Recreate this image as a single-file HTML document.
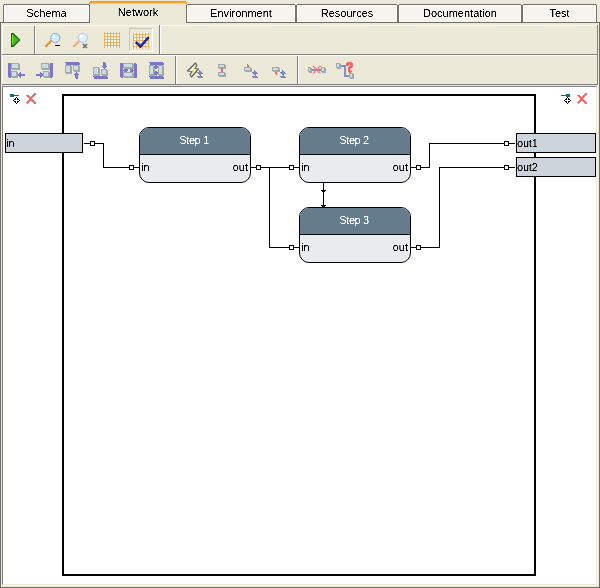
<!DOCTYPE html>
<html><head><meta charset="utf-8">
<style>
*{box-sizing:border-box;margin:0;padding:0}
html,body{width:600px;height:588px;overflow:hidden;background:#ECE9D8;font-family:"Liberation Sans",sans-serif;font-size:11px;color:#000}
.a{position:absolute}
.tab{position:absolute;top:4px;height:19px;border:1px solid #74716A;border-bottom:none;background:#F5F4EF;text-align:center;line-height:16px;box-shadow:inset 0 0 0 1px #fff}
.tab span{display:inline-block}
.t{display:inline-block;filter:url(#th)}
.hd .t{position:relative;left:-1px}
.sel{top:1px;height:22px;background:#ECE9D8;border:none;box-shadow:none;line-height:22px}
.hl{position:absolute;background:#fff}
.dk{position:absolute;background:#716F64}
.gr{position:absolute;background:#ACA899}
.node{position:absolute;width:112px;height:56px;border:1px solid #000;border-radius:10px;overflow:hidden;background:#E9ECEF}
.node .hd{position:absolute;left:0;top:0;right:0;height:27px;background:#657C8D;border-bottom:1px solid #000;color:#fff;text-align:center;line-height:24px;font-size:11px;letter-spacing:-0.4px}
.node .pin{position:absolute;left:1px;top:32px;line-height:14px}
.node .pout{position:absolute;right:2px;top:32px;line-height:14px}
.port{position:absolute;width:5px;height:5px;border:1px solid #000;background:#fff}
.io{position:absolute;border:1px solid #000;background:#CDD4DB;line-height:19px;padding-left:0;letter-spacing:-0.2px}
svg{position:absolute;left:0;top:0}
</style></head><body>
<svg width="0" height="0" style="position:absolute"><filter id="th" x="-5%" y="-5%" width="110%" height="110%"><feComponentTransfer><feFuncA type="linear" slope="3" intercept="-0.9"/></feComponentTransfer></filter></svg>
<!-- tabs -->
<div class="tab sel" style="left:89px;width:98px"><span class="t">Network</span></div>
<div class="tab" style="left:3px;width:87px"><span class="t">Schema</span></div>
<div class="tab" style="left:186px;width:110px"><span class="t">Environment</span></div>
<div class="tab" style="left:296px;width:102px"><span class="t">Resources</span></div>
<div class="tab" style="left:398px;width:124px"><span class="t">Documentation</span></div>
<div class="tab" style="left:522px;width:75px"><span class="t">Test</span></div>
<div class="a" style="left:90px;top:1px;width:96px;height:1px;background:#FF8A1E"></div>
<div class="a" style="left:89px;top:2px;width:98px;height:1px;background:#FFAA2E"></div>
<div class="a" style="left:89px;top:3px;width:98px;height:1px;background:#FFC83A"></div>
<div class="a" style="left:89px;top:2px;width:1px;height:2px;background:#FF8A1E"></div>
<div class="a" style="left:186px;top:2px;width:1px;height:2px;background:#FF8A1E"></div>

<div class="a" style="left:3px;top:4px;width:1px;height:1px;background:#F2F0E6"></div><div class="a" style="left:89px;top:4px;width:1px;height:1px;background:#F2F0E6"></div><div class="a" style="left:186px;top:4px;width:1px;height:1px;background:#F2F0E6"></div><div class="a" style="left:295px;top:4px;width:1px;height:1px;background:#F2F0E6"></div><div class="a" style="left:296px;top:4px;width:1px;height:1px;background:#F2F0E6"></div><div class="a" style="left:397px;top:4px;width:1px;height:1px;background:#F2F0E6"></div><div class="a" style="left:398px;top:4px;width:1px;height:1px;background:#F2F0E6"></div><div class="a" style="left:521px;top:4px;width:1px;height:1px;background:#F2F0E6"></div><div class="a" style="left:522px;top:4px;width:1px;height:1px;background:#F2F0E6"></div><div class="a" style="left:596px;top:4px;width:1px;height:1px;background:#F2F0E6"></div>
<!-- panel borders -->
<div class="dk" style="left:0;top:22px;width:89px;height:1px"></div>
<div class="dk" style="left:187px;top:22px;width:413px;height:1px"></div>
<div class="dk" style="left:0;top:22px;width:1px;height:566px"></div>
<div class="dk" style="left:599px;top:22px;width:1px;height:566px"></div>
<div class="dk" style="left:0;top:587px;width:600px;height:1px"></div>

<!-- toolbar rows -->
<div class="hl" style="left:2px;top:25px;width:596px;height:1px"></div>
<div class="hl" style="left:2px;top:25px;width:1px;height:59px"></div>
<div class="gr" style="left:2px;top:54px;width:596px;height:1px;background:#808080"></div>
<div class="hl" style="left:2px;top:55px;width:596px;height:1px"></div>
<div class="gr" style="left:2px;top:84px;width:596px;height:1px;background:#808080"></div>
<div class="gr" style="left:597px;top:25px;width:1px;height:60px;background:#808080"></div>
<!-- separators -->
<div class="gr" style="left:34px;top:26px;width:1px;height:28px;background:#808080"></div>
<div class="hl" style="left:35px;top:26px;width:1px;height:28px"></div>
<div class="gr" style="left:159px;top:25px;width:1px;height:29px;background:#808080"></div>
<div class="hl" style="left:160px;top:25px;width:1px;height:29px"></div>
<div class="gr" style="left:175px;top:56px;width:1px;height:28px;background:#808080"></div>
<div class="hl" style="left:176px;top:56px;width:1px;height:28px"></div>
<div class="gr" style="left:297px;top:56px;width:1px;height:28px;background:#808080"></div>
<div class="hl" style="left:298px;top:56px;width:1px;height:28px"></div>

<svg width="600" height="90" viewBox="0 0 600 90" style="position:absolute;left:0;top:0">
<!-- play -->
<polygon points="11,33 13.5,33 20.5,40 13.5,47 11,47" fill="#1E6A12"/>
<polygon points="12,34.5 13,34.5 18.8,40 13,45.5 12,45.5" fill="#4DAF2C"/>
<rect x="12" y="35" width="1" height="9" fill="#6CF000" shape-rendering="crispEdges"/>
<!-- zoom out -->
<line x1="46" y1="46" x2="50.8" y2="41.2" stroke="#D88838" stroke-width="2.2" stroke-linecap="round"/>
<line x1="45.7" y1="45.5" x2="50.3" y2="40.9" stroke="#F7B45A" stroke-width="1" stroke-linecap="round"/>
<circle cx="55.3" cy="37.9" r="4.6" fill="#CCEBFA" stroke="#9AA6DA" stroke-width="1"/>
<circle cx="53.8" cy="36.4" r="1.4" fill="#fff"/>
<rect x="55" y="45" width="5" height="1.2" fill="#000" shape-rendering="crispEdges"/>
<!-- zoom in (faded) -->
<line x1="74" y1="46" x2="78.8" y2="41.2" stroke="#E0A87A" stroke-width="2.2" stroke-linecap="round"/>
<line x1="73.7" y1="45.5" x2="78.3" y2="40.9" stroke="#F8CC90" stroke-width="1" stroke-linecap="round"/>
<circle cx="82.8" cy="37.9" r="4.6" fill="#DDF0FB" stroke="#BCC4E6" stroke-width="1"/>
<circle cx="81.3" cy="36.4" r="1.4" fill="#fff"/>
<path d="M83 44 L87 48 M87 44 L83 48" stroke="#6E6E6E" stroke-width="1.6"/>
<!-- grid -->
<g shape-rendering="crispEdges">
<g transform="translate(104,32)"><g id="grid"><rect x="0" y="0" width="16" height="16" fill="#F0AD5E"/><g fill="#F4FFFF"><rect x="1" y="0" width="2" height="1"/><rect x="1" y="2" width="2" height="2"/><rect x="1" y="5" width="2" height="2"/><rect x="1" y="8" width="2" height="2"/><rect x="1" y="11" width="2" height="2"/><rect x="1" y="14" width="2" height="2"/><rect x="4" y="0" width="2" height="1"/><rect x="4" y="2" width="2" height="2"/><rect x="4" y="5" width="2" height="2"/><rect x="4" y="8" width="2" height="2"/><rect x="4" y="11" width="2" height="2"/><rect x="4" y="14" width="2" height="2"/><rect x="7" y="0" width="2" height="1"/><rect x="7" y="2" width="2" height="2"/><rect x="7" y="5" width="2" height="2"/><rect x="7" y="8" width="2" height="2"/><rect x="7" y="11" width="2" height="2"/><rect x="7" y="14" width="2" height="2"/><rect x="10" y="0" width="2" height="1"/><rect x="10" y="2" width="2" height="2"/><rect x="10" y="5" width="2" height="2"/><rect x="10" y="8" width="2" height="2"/><rect x="10" y="11" width="2" height="2"/><rect x="10" y="14" width="2" height="2"/><rect x="13" y="0" width="2" height="1"/><rect x="13" y="2" width="2" height="2"/><rect x="13" y="5" width="2" height="2"/><rect x="13" y="8" width="2" height="2"/><rect x="13" y="11" width="2" height="2"/><rect x="13" y="14" width="2" height="2"/></g></g></g>
<!-- pressed button -->
<rect x="129" y="28" width="24" height="24" fill="#fff"/>
<rect x="129" y="28" width="23" height="23" fill="#C9C6BC"/>
<rect x="130" y="29" width="22" height="22" fill="#ECE9D8"/>
<use href="#grid" x="133" y="33"/>
</g>
<polyline points="136.5,42.5 140.5,46.5 148,38" fill="none" stroke="#0A0A50" stroke-width="2.4" stroke-linecap="round" stroke-linejoin="miter"/>
<polyline points="137,42.5 140.5,46 147.5,38.5" fill="none" stroke="#2233F0" stroke-width="1.1" stroke-linecap="round"/>

<!-- row 2 -->
<polygon points="195.5,63 197,65.5 195,68.5 198.5,69 191.5,77 190,74.5 192,71.5 187.5,71" fill="#E9E6B0" stroke="#5E5E60" stroke-width="1.15" stroke-linejoin="round"/><path d="M190.5 71L194.5 67" stroke="#FBFAE0" stroke-width="1.5"/>
<g shape-rendering="crispEdges"><rect x="8" y="63" width="3" height="14" fill="#7D77CA"/><rect x="9" y="77" width="2" height="1" fill="#7D77CA"/><rect x="11" y="63" width="9" height="7" fill="#A1AAAA"/><rect x="12" y="64" width="6" height="4" fill="#C9DEE5"/><rect x="19" y="63" width="1" height="1" fill="#ECE9D8"/><rect x="11" y="69" width="1" height="1" fill="#ECE9D8"/><rect x="11" y="71" width="7" height="7" fill="#A1AAAA"/><rect x="12" y="72" width="4" height="4" fill="#C9DEE5"/><rect x="17" y="71" width="1" height="1" fill="#ECE9D8"/><rect x="11" y="77" width="1" height="1" fill="#ECE9D8"/><rect x="20" y="72" width="1" height="1" fill="#7D77CA"/><rect x="19" y="73" width="2" height="1" fill="#7D77CA"/><rect x="18" y="74" width="7" height="1" fill="#7D77CA"/><rect x="18" y="75" width="7" height="1" fill="#7D77CA"/><rect x="19" y="76" width="2" height="1" fill="#7D77CA"/><rect x="20" y="77" width="1" height="1" fill="#7D77CA"/><rect x="50" y="63" width="3" height="14" fill="#7D77CA"/><rect x="50" y="77" width="2" height="1" fill="#7D77CA"/><rect x="41" y="63" width="9" height="7" fill="#A1AAAA"/><rect x="42" y="64" width="6" height="4" fill="#C9DEE5"/><rect x="49" y="63" width="1" height="1" fill="#ECE9D8"/><rect x="41" y="69" width="1" height="1" fill="#ECE9D8"/><rect x="43" y="71" width="7" height="7" fill="#A1AAAA"/><rect x="44" y="72" width="4" height="4" fill="#C9DEE5"/><rect x="49" y="71" width="1" height="1" fill="#ECE9D8"/><rect x="43" y="77" width="1" height="1" fill="#ECE9D8"/><rect x="40" y="72" width="1" height="1" fill="#7D77CA"/><rect x="40" y="73" width="2" height="1" fill="#7D77CA"/><rect x="36" y="74" width="7" height="1" fill="#7D77CA"/><rect x="36" y="75" width="7" height="1" fill="#7D77CA"/><rect x="40" y="76" width="2" height="1" fill="#7D77CA"/><rect x="40" y="77" width="1" height="1" fill="#7D77CA"/><rect x="65" y="62" width="14" height="1" fill="#7D77CA"/><rect x="66" y="63" width="14" height="2" fill="#7D77CA"/><rect x="65" y="65" width="7" height="9" fill="#A1AAAA"/><rect x="66" y="66" width="4" height="6" fill="#C9DEE5"/><rect x="71" y="65" width="1" height="1" fill="#ECE9D8"/><rect x="65" y="73" width="1" height="1" fill="#ECE9D8"/><rect x="73" y="65" width="7" height="7" fill="#A1AAAA"/><rect x="74" y="66" width="4" height="4" fill="#C9DEE5"/><rect x="79" y="65" width="1" height="1" fill="#ECE9D8"/><rect x="73" y="71" width="1" height="1" fill="#ECE9D8"/><rect x="76" y="72" width="1" height="1" fill="#7D77CA"/><rect x="75" y="73" width="3" height="1" fill="#7D77CA"/><rect x="74" y="74" width="5" height="1" fill="#7D77CA"/><rect x="75" y="75" width="3" height="1" fill="#7D77CA"/><rect x="75" y="76" width="3" height="1" fill="#7D77CA"/><rect x="75" y="77" width="3" height="1" fill="#7D77CA"/><rect x="76" y="78" width="2" height="1" fill="#7D77CA"/><rect x="93" y="76" width="14" height="1" fill="#7D77CA"/><rect x="94" y="77" width="14" height="2" fill="#7D77CA"/><rect x="93" y="67" width="7" height="9" fill="#A1AAAA"/><rect x="94" y="68" width="4" height="6" fill="#C9DEE5"/><rect x="99" y="67" width="1" height="1" fill="#ECE9D8"/><rect x="93" y="75" width="1" height="1" fill="#ECE9D8"/><rect x="101" y="69" width="7" height="7" fill="#A1AAAA"/><rect x="102" y="70" width="4" height="4" fill="#C9DEE5"/><rect x="107" y="69" width="1" height="1" fill="#ECE9D8"/><rect x="101" y="75" width="1" height="1" fill="#ECE9D8"/><rect x="103" y="62" width="2" height="1" fill="#7D77CA"/><rect x="103" y="63" width="3" height="1" fill="#7D77CA"/><rect x="103" y="64" width="3" height="1" fill="#7D77CA"/><rect x="103" y="65" width="3" height="1" fill="#7D77CA"/><rect x="102" y="66" width="5" height="1" fill="#7D77CA"/><rect x="103" y="67" width="3" height="1" fill="#7D77CA"/><rect x="104" y="68" width="1" height="1" fill="#7D77CA"/><rect x="120" y="63" width="3" height="14" fill="#7D77CA"/><rect x="121" y="77" width="2" height="1" fill="#7D77CA"/><rect x="134" y="63" width="2" height="1" fill="#7D77CA"/><rect x="134" y="64" width="3" height="14" fill="#7D77CA"/><rect x="123" y="63" width="11" height="6" fill="#A1AAAA"/><rect x="124" y="64" width="8" height="3" fill="#C9DEE5"/><rect x="133" y="63" width="1" height="1" fill="#ECE9D8"/><rect x="123" y="68" width="1" height="1" fill="#ECE9D8"/><rect x="123" y="72" width="11" height="6" fill="#A1AAAA"/><rect x="124" y="73" width="8" height="3" fill="#C9DEE5"/><rect x="133" y="72" width="1" height="1" fill="#ECE9D8"/><rect x="123" y="77" width="1" height="1" fill="#ECE9D8"/><rect x="124" y="69" width="4" height="1" fill="#7D77CA"/><rect x="123" y="70" width="5" height="1" fill="#7D77CA"/><rect x="124" y="71" width="3" height="1" fill="#7D77CA"/><rect x="130" y="69" width="3" height="1" fill="#7D77CA"/><rect x="130" y="70" width="4" height="1" fill="#7D77CA"/><rect x="130" y="71" width="3" height="1" fill="#7D77CA"/><rect x="149" y="62" width="14" height="1" fill="#7D77CA"/><rect x="150" y="63" width="14" height="2" fill="#7D77CA"/><rect x="149" y="76" width="14" height="1" fill="#7D77CA"/><rect x="150" y="77" width="14" height="2" fill="#7D77CA"/><rect x="149" y="65" width="6" height="11" fill="#A1AAAA"/><rect x="150" y="66" width="3" height="8" fill="#C9DEE5"/><rect x="154" y="65" width="1" height="1" fill="#ECE9D8"/><rect x="149" y="75" width="1" height="1" fill="#ECE9D8"/><rect x="158" y="65" width="6" height="11" fill="#A1AAAA"/><rect x="159" y="66" width="3" height="8" fill="#C9DEE5"/><rect x="163" y="65" width="1" height="1" fill="#ECE9D8"/><rect x="158" y="75" width="1" height="1" fill="#ECE9D8"/><rect x="155" y="65" width="2" height="1" fill="#7D77CA"/><rect x="154" y="66" width="4" height="1" fill="#7D77CA"/><rect x="154" y="67" width="4" height="1" fill="#7D77CA"/><rect x="155" y="68" width="2" height="1" fill="#7D77CA"/><rect x="155" y="71" width="2" height="1" fill="#7D77CA"/><rect x="154" y="72" width="4" height="1" fill="#7D77CA"/><rect x="154" y="73" width="4" height="1" fill="#7D77CA"/><rect x="155" y="74" width="2" height="1" fill="#7D77CA"/><rect x="156" y="75" width="1" height="1" fill="#7D77CA"/><rect x="218" y="64" width="8" height="5" fill="#A1AAAA"/><rect x="219" y="65" width="5" height="2" fill="#C9DEE5"/><rect x="225" y="64" width="1" height="1" fill="#ECE9D8"/><rect x="218" y="68" width="1" height="1" fill="#ECE9D8"/><rect x="218" y="72" width="8" height="5" fill="#A1AAAA"/><rect x="219" y="73" width="5" height="2" fill="#C9DEE5"/><rect x="225" y="72" width="1" height="1" fill="#ECE9D8"/><rect x="218" y="76" width="1" height="1" fill="#ECE9D8"/><rect x="221" y="69" width="2" height="3" fill="#F5636C"/><rect x="221" y="68" width="1" height="1" fill="#F5636C"/><rect x="244" y="67" width="8" height="5" fill="#A1AAAA"/><rect x="245" y="68" width="5" height="2" fill="#C9DEE5"/><rect x="251" y="67" width="1" height="1" fill="#ECE9D8"/><rect x="244" y="71" width="1" height="1" fill="#ECE9D8"/><rect x="247" y="64" width="1" height="1" fill="#F5636C"/><rect x="247" y="65" width="2" height="2" fill="#F5636C"/><rect x="272" y="67" width="8" height="5" fill="#A1AAAA"/><rect x="273" y="68" width="5" height="2" fill="#C9DEE5"/><rect x="279" y="67" width="1" height="1" fill="#ECE9D8"/><rect x="272" y="71" width="1" height="1" fill="#ECE9D8"/><rect x="275" y="72" width="2" height="2" fill="#F5636C"/><rect x="276" y="74" width="1" height="1" fill="#F5636C"/><rect x="254" y="70" width="1" height="1" fill="#8085BD"/><rect x="254" y="71" width="2" height="1" fill="#8085BD"/><rect x="252" y="72" width="5" height="1" fill="#8085BD"/><rect x="253" y="73" width="5" height="1" fill="#8085BD"/><rect x="254" y="74" width="2" height="1" fill="#8085BD"/><rect x="255" y="75" width="1" height="1" fill="#8085BD"/><rect x="252" y="76" width="5" height="1" fill="#8085BD"/><rect x="253" y="77" width="5" height="1" fill="#8085BD"/><rect x="282" y="70" width="1" height="1" fill="#8085BD"/><rect x="282" y="71" width="2" height="1" fill="#8085BD"/><rect x="280" y="72" width="5" height="1" fill="#8085BD"/><rect x="281" y="73" width="5" height="1" fill="#8085BD"/><rect x="282" y="74" width="2" height="1" fill="#8085BD"/><rect x="283" y="75" width="1" height="1" fill="#8085BD"/><rect x="280" y="76" width="5" height="1" fill="#8085BD"/><rect x="281" y="77" width="5" height="1" fill="#8085BD"/><rect x="199" y="70" width="1" height="1" fill="#8085BD"/><rect x="199" y="71" width="2" height="1" fill="#8085BD"/><rect x="197" y="72" width="5" height="1" fill="#8085BD"/><rect x="198" y="73" width="5" height="1" fill="#8085BD"/><rect x="199" y="74" width="2" height="1" fill="#8085BD"/><rect x="200" y="75" width="1" height="1" fill="#8085BD"/><rect x="197" y="76" width="5" height="1" fill="#8085BD"/><rect x="198" y="77" width="5" height="1" fill="#8085BD"/><rect x="308" y="67" width="4" height="6" fill="#A1AAAA"/><rect x="309" y="68" width="1" height="3" fill="#C9DEE5"/><rect x="311" y="67" width="1" height="1" fill="#ECE9D8"/><rect x="308" y="72" width="1" height="1" fill="#ECE9D8"/><rect x="312" y="69" width="9" height="2" fill="#8A90BE"/><rect x="321" y="67" width="5" height="6" fill="#A1AAAA"/><rect x="322" y="68" width="2" height="3" fill="#C9DEE5"/><rect x="325" y="67" width="1" height="1" fill="#ECE9D8"/><rect x="321" y="72" width="1" height="1" fill="#ECE9D8"/><rect x="336" y="63" width="5" height="6" fill="#A1AAAA"/><rect x="337" y="64" width="2" height="3" fill="#C9DEE5"/><rect x="340" y="63" width="1" height="1" fill="#ECE9D8"/><rect x="336" y="68" width="1" height="1" fill="#ECE9D8"/><rect x="341" y="65" width="4" height="2" fill="#8A90BE"/><rect x="344" y="65" width="2" height="12" fill="#8A90BE"/><rect x="346" y="75" width="3" height="2" fill="#8A90BE"/><rect x="349" y="73" width="5" height="6" fill="#A1AAAA"/><rect x="350" y="74" width="2" height="3" fill="#C9DEE5"/><rect x="353" y="73" width="1" height="1" fill="#ECE9D8"/><rect x="349" y="78" width="1" height="1" fill="#ECE9D8"/></g>

<g shape-rendering="crispEdges"><rect x="347" y="62" width="5" height="1" fill="#F5636C"/><rect x="346" y="63" width="7" height="1" fill="#F5636C"/><rect x="346" y="64" width="3" height="1" fill="#F5636C"/><rect x="350" y="64" width="3" height="1" fill="#F5636C"/><rect x="346" y="65" width="3" height="1" fill="#F5636C"/><rect x="350" y="65" width="3" height="1" fill="#F5636C"/><rect x="349" y="66" width="4" height="1" fill="#F5636C"/><rect x="348" y="67" width="4" height="1" fill="#F5636C"/><rect x="348" y="68" width="3" height="1" fill="#F5636C"/><rect x="348" y="69" width="2" height="1" fill="#F5636C"/><rect x="348" y="70" width="3" height="1" fill="#F5636C"/><rect x="348" y="71" width="4" height="1" fill="#F5636C"/><rect x="349" y="72" width="2" height="1" fill="#F5636C"/></g>
<path d="M313 66 L320.5 73.5 M320.5 66 L313 73.5" stroke="#F5636C" stroke-width="1.6" stroke-dasharray="1.4 0.6"/>
</svg>
<!-- canvas -->
<div class="a" style="left:2px;top:86px;width:595px;height:499px;background:#fff;border-left:1px solid #808080;border-top:1px solid #808080;border-right:1px solid #ECE9D8;border-bottom:1px solid #ECE9D8"></div>
<div class="hl" style="left:597px;top:86px;width:1px;height:500px;background:#F7F5EC"></div>
<div class="hl" style="left:2px;top:585px;width:596px;height:1px;background:#F7F5EC"></div>

<!-- diagram -->
<svg width="600" height="588" viewBox="0 0 600 588" shape-rendering="crispEdges">
<g fill="none" stroke="#000" stroke-width="1">
<rect x="63" y="95" width="472" height="480" stroke-width="2"/>
<!-- in -> step1 -->
<path d="M84 143.5H90 M95 143.5H103.5V167.5H129 M134 167.5H139"/>
<!-- step1 out -> step2 in, step3 in -->
<path d="M251 167.5H256 M261 167.5H289 M269.5 167.5V247.5H289 M294 167.5H299 M294 247.5H299"/>
<!-- step2 out -> out1 -->
<path d="M411 167.5H416 M421 167.5H429.5V143.5H504 M509 143.5H515"/>
<!-- step3 out -> out2 -->
<path d="M411 247.5H416 M421 247.5H439.5V167.5H504 M509 167.5H515"/>
<!-- step2 -> step3 -->
<path d="M323.5 183V207"/>
</g>
<g shape-rendering="crispEdges" fill="#000">
<rect x="321" y="190" width="5" height="1"/><rect x="322" y="191" width="3" height="1"/>
<rect x="321" y="205" width="5" height="1"/><rect x="322" y="206" width="3" height="1"/>
</g>
<!-- canvas corner icons -->
<g id="pinic" shape-rendering="crispEdges">
<rect x="10" y="94" width="4" height="3" fill="#176B68"/><rect x="14" y="95" width="5" height="1" fill="#176B68"/>
<g fill="#000" id="dia"><rect x="16" y="97" width="1" height="1"/><rect x="15" y="98" width="1" height="1"/><rect x="17" y="98" width="1" height="1"/><rect x="14" y="99" width="2" height="1"/><rect x="17" y="99" width="2" height="1"/><rect x="13" y="100" width="1" height="1"/><rect x="19" y="100" width="1" height="1"/><rect x="14" y="101" width="2" height="1"/><rect x="17" y="101" width="2" height="1"/><rect x="15" y="102" width="1" height="1"/><rect x="17" y="102" width="1" height="1"/><rect x="16" y="103" width="1" height="1"/></g>
</g>
<g id="xic"><path d="M26.5 95 L36 103.5 M35.5 93 L27 103.5" stroke="#EE6B6B" stroke-width="2" fill="none"/></g>
<g shape-rendering="crispEdges">
<rect x="566" y="94" width="4" height="3" fill="#176B68"/><rect x="561" y="95" width="5" height="1" fill="#176B68"/>
</g>
<use href="#dia" x="551" y="0"/>
<path d="M577.5 95 L587 103.5 M586.5 93 L578 103.5" stroke="#EE6B6B" stroke-width="2" fill="none"/>
<g>
</g>
</svg>

<div class="io" style="left:5px;top:133px;width:78px;height:20px;letter-spacing:0"><span class="t">in</span></div>
<div class="io" style="left:516px;top:133px;width:80px;height:20px"><span class="t">out1</span></div>
<div class="io" style="left:516px;top:157px;width:80px;height:20px"><span class="t">out2</span></div>

<div class="node" style="left:139px;top:127px"><div class="hd"><span class="t">Step 1</span></div><div class="pin"><span class="t">in</span></div><div class="pout"><span class="t">out</span></div></div>
<div class="node" style="left:299px;top:127px"><div class="hd"><span class="t">Step 2</span></div><div class="pin"><span class="t">in</span></div><div class="pout"><span class="t">out</span></div></div>
<div class="node" style="left:299px;top:207px"><div class="hd"><span class="t">Step 3</span></div><div class="pin"><span class="t">in</span></div><div class="pout"><span class="t">out</span></div></div>

<div class="port" style="left:90px;top:141px"></div>
<div class="port" style="left:129px;top:165px"></div>
<div class="port" style="left:256px;top:165px"></div>
<div class="port" style="left:289px;top:165px"></div>
<div class="port" style="left:289px;top:245px"></div>
<div class="port" style="left:416px;top:165px"></div>
<div class="port" style="left:416px;top:245px"></div>
<div class="port" style="left:504px;top:141px"></div>
<div class="port" style="left:504px;top:165px"></div>

</body></html>
